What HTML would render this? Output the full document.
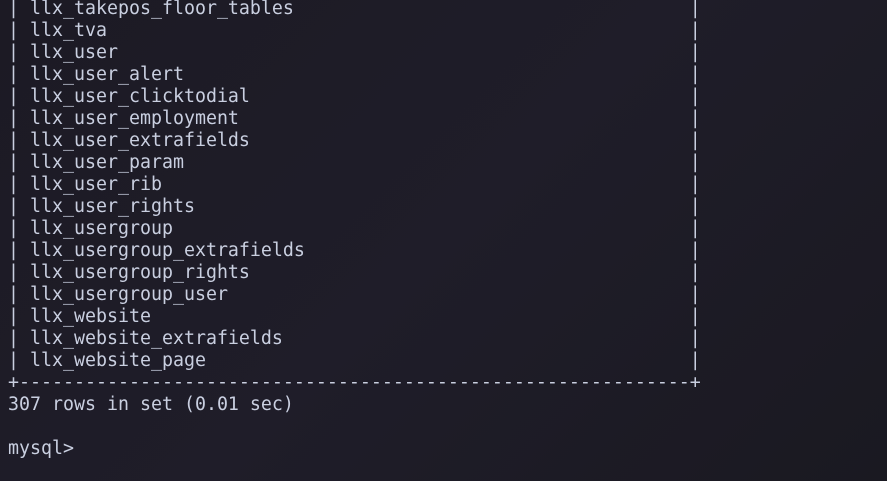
<!DOCTYPE html>
<html><head><style>
html,body{margin:0;padding:0;width:887px;height:481px;overflow:hidden;background:#1b1a23;}
body{background:linear-gradient(135deg,#1c1a24 0%,#1f1d29 50%,#1a1921 100%);}
pre{position:absolute;left:8px;top:-2px;margin:0;font-family:"DejaVu Sans Mono","Liberation Mono",monospace;font-size:18.27px;line-height:22px;color:#c9cfe0;}
</style></head><body><pre>| llx_takepos_floor_tables                                    |
| llx_tva                                                     |
| llx_user                                                    |
| llx_user_alert                                              |
| llx_user_clicktodial                                        |
| llx_user_employment                                         |
| llx_user_extrafields                                        |
| llx_user_param                                              |
| llx_user_rib                                                |
| llx_user_rights                                             |
| llx_usergroup                                               |
| llx_usergroup_extrafields                                   |
| llx_usergroup_rights                                        |
| llx_usergroup_user                                          |
| llx_website                                                 |
| llx_website_extrafields                                     |
| llx_website_page                                            |
+-------------------------------------------------------------+
307 rows in set (0.01 sec)

mysql> </pre></body></html>
